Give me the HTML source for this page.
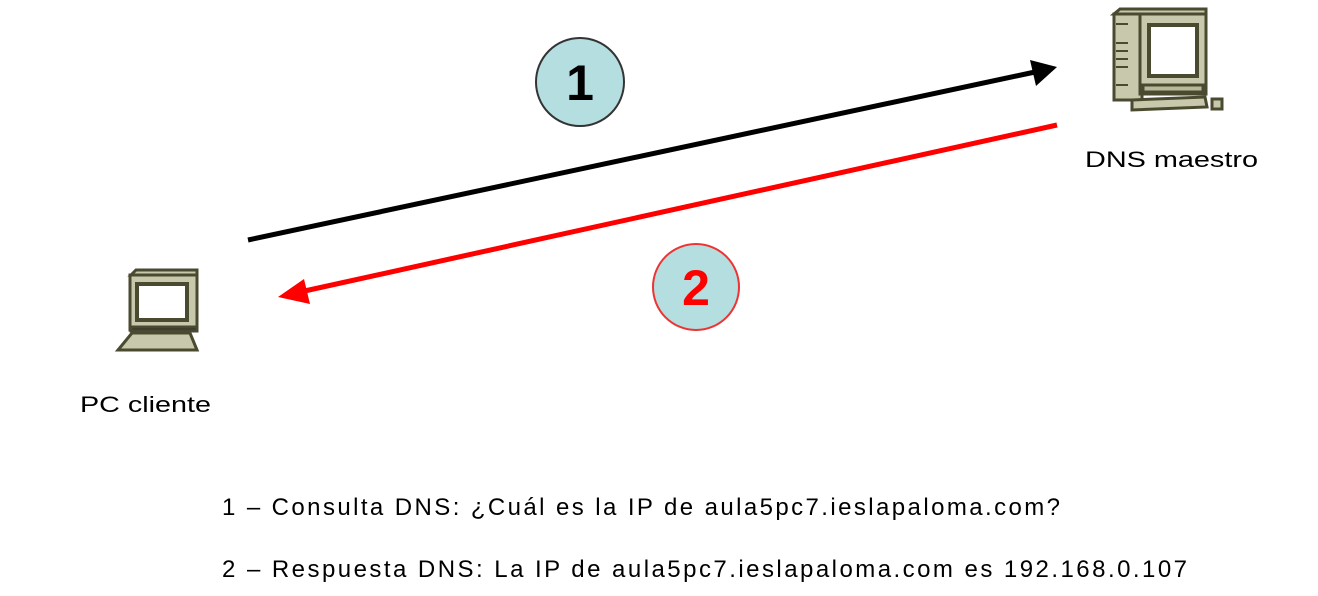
<!DOCTYPE html>
<html><head><meta charset="utf-8"><style>html,body{margin:0;padding:0;background:#fff;}svg{display:block}</style></head>
<body>
<svg width="1318" height="596" viewBox="0 0 1318 596" xmlns="http://www.w3.org/2000/svg" font-family="Liberation Sans, Arial, sans-serif">
<rect width="1318" height="596" fill="#fff"/>
<line x1="248" y1="240" x2="1035" y2="72" stroke="#000" stroke-width="5"/>
<polygon points="1057,67 1030,60 1036,86" fill="#000"/>
<line x1="1057" y1="125" x2="300" y2="292" stroke="#f00" stroke-width="5"/>
<polygon points="278,297 304,279 310,304" fill="#f00"/>
<circle cx="580" cy="82" r="44" fill="#b5dee0" stroke="#333" stroke-width="2"/>
<text x="580" y="100" text-anchor="middle" font-size="50" font-weight="bold" fill="#000">1</text>
<circle cx="696" cy="287" r="43" fill="#b5dee0" stroke="#e33" stroke-width="2"/>
<text x="696" y="305" text-anchor="middle" font-size="50" font-weight="bold" fill="#f00">2</text>
<g stroke="#4a4a30" stroke-width="3" fill="#c8c8ac">
<rect x="1114" y="14" width="28" height="86"/>
<polygon points="1114,14 1120,9 1206,9 1206,14"/>
<rect x="1140" y="14" width="66" height="80"/>
<rect x="1149" y="25" width="48" height="51" fill="#fff" stroke-width="4"/>
<rect x="1143" y="85" width="60" height="7" fill="#b8b89a"/>
<polygon points="1132,100 1205,97 1207,107 1132,110"/>
<rect x="1212" y="99" width="10" height="10"/>
</g>
<g stroke="#4a4a30" stroke-width="2"><line x1="1116" y1="24" x2="1128" y2="24"/><line x1="1116" y1="43" x2="1128" y2="43"/><line x1="1116" y1="51" x2="1128" y2="51"/><line x1="1116" y1="59" x2="1128" y2="59"/><line x1="1116" y1="67" x2="1128" y2="67"/><line x1="1116" y1="85" x2="1128" y2="85"/></g>
<g stroke="#4a4a30" stroke-width="3" fill="#c8c8ac">
<polygon points="131,275 136,270 197,270 197,275"/>
<rect x="130" y="275" width="67" height="55"/>
<rect x="137" y="284" width="50" height="36" fill="#fff" stroke-width="4"/>
<rect x="131" y="327" width="66" height="4" fill="#333"/>
<polygon points="132,333 190,333 197,350 118,350"/>
</g>
<text x="1085" y="167" font-size="22" textLength="173" lengthAdjust="spacingAndGlyphs" fill="#000">DNS maestro</text>
<text x="80" y="412" font-size="22" textLength="131" lengthAdjust="spacingAndGlyphs" fill="#000">PC cliente</text>
<text x="222" y="515" font-size="24" textLength="838" fill="#000">1 – Consulta DNS: ¿Cuál es la IP de aula5pc7.ieslapaloma.com?</text>
<text x="222" y="577" font-size="24" textLength="965" fill="#000">2 – Respuesta DNS: La IP de aula5pc7.ieslapaloma.com es 192.168.0.107</text>
</svg>
</body></html>
